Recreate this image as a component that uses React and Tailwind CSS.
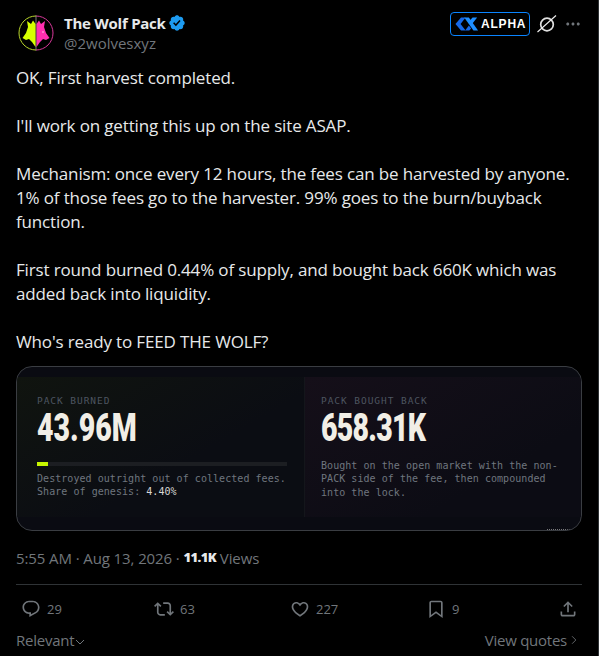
const P = {
  reply: "M1.751 10c0-4.42 3.584-8 8.005-8h4.366c4.49 0 8.129 3.64 8.129 8.13 0 2.96-1.607 5.68-4.196 7.11l-8.054 4.46v-3.69h-.067c-4.49.1-8.183-3.51-8.183-8.01zm8.005-6c-3.317 0-6.005 2.69-6.005 6 0 3.37 2.77 6.08 6.138 6.01l.351-.01h1.761v2.3l5.087-2.81c1.951-1.08 3.163-3.13 3.163-5.36 0-3.39-2.744-6.13-6.129-6.13H9.756z",
  rt: "M4.5 3.88l4.432 4.14-1.364 1.46L5.5 7.55V16c0 1.1.896 2 2 2H13v2H7.5c-2.209 0-4-1.79-4-4V7.55L1.432 9.48.068 8.02 4.5 3.88zM16.5 6H11V4h5.5c2.209 0 4 1.79 4 4v8.45l2.068-1.93 1.364 1.46-4.432 4.14-4.432-4.14 1.364-1.46 2.068 1.93V8c0-1.1-.896-2-2-2z",
  heart: "M16.697 5.5c-1.222-.06-2.679.51-3.89 2.16l-.805 1.09-.806-1.09C9.984 6.01 8.526 5.44 7.304 5.5c-1.243.07-2.349.78-2.91 1.91-.552 1.12-.633 2.78.479 4.82 1.074 1.97 3.257 4.27 7.129 6.61 3.87-2.34 6.052-4.64 7.126-6.61 1.111-2.04 1.03-3.7.477-4.82-.561-1.13-1.666-1.84-2.908-1.91zm4.187 7.69c-1.351 2.48-4.001 5.12-8.379 7.67l-.503.3-.504-.3c-4.379-2.55-7.029-5.19-8.382-7.67-1.36-2.5-1.41-4.86-.514-6.67.887-1.79 2.647-2.91 4.601-3.01 1.651-.09 3.368.56 4.798 2.01 1.429-1.45 3.146-2.1 4.796-2.01 1.954.1 3.714 1.22 4.601 3.01.896 1.81.846 4.17-.514 6.67z",
  book: "M4 4.5C4 3.12 5.119 2 6.5 2h11C18.881 2 20 3.12 20 4.5v18.44l-8-5.71-8 5.71V4.5zM6.5 4c-.276 0-.5.22-.5.5v14.56l6-4.29 6 4.29V4.5c0-.28-.224-.5-.5-.5h-11z",
  share: "M12 2.59l5.7 5.7-1.41 1.42L13 6.41V16h-2V6.41l-3.3 3.3-1.41-1.42L12 2.59zM21 15l-.02 3.51c0 1.38-1.12 2.49-2.5 2.49H5.5C4.11 21 3 19.88 3 18.5V15h2v3.5c0 .28.22.5.5.5h12.98c.28 0 .5-.22.5-.5L19 15h2z",
  verified: "M22.25 12c0-1.43-.88-2.67-2.19-3.34.46-1.39.2-2.9-.81-3.91s-2.52-1.27-3.91-.81c-.66-1.31-1.91-2.19-3.34-2.19s-2.67.88-3.33 2.19c-1.4-.46-2.91-.2-3.92.81s-1.26 2.52-.8 3.91c-1.31.67-2.2 1.91-2.2 3.34s.89 2.67 2.2 3.34c-.46 1.39-.21 2.9.8 3.91s2.52 1.26 3.91.81c.67 1.31 1.91 2.19 3.34 2.19s2.68-.88 3.34-2.19c1.39.45 2.9.2 3.91-.81s1.27-2.52.81-3.91c1.31-.67 2.19-1.91 2.19-3.34zm-11.71 4.2L6.8 12.46l1.41-1.42 2.26 2.26 4.8-5.23 1.47 1.36-6.2 6.77z",
  more: "M3 12c0-1.1.9-2 2-2s2 .9 2 2-.9 2-2 2-2-.9-2-2zm9 2c1.1 0 2-.9 2-2s-.9-2-2-2-2 .9-2 2 .9 2 2 2zm7 0c1.1 0 2-.9 2-2s-.9-2-2-2-2 .9-2 2 .9 2 2 2z",
};

function Icon({ d, className }) {
  return (
    <svg viewBox="0 0 24 24" className={className} fill="currentColor">
      <path d={d} />
    </svg>
  );
}

function Avatar() {
  return (
    <svg viewBox="0 0 36 36" className="w-[36px] h-[36px] shrink-0">
      <path d="M18 1 A17 17 0 0 0 18 35" fill="none" stroke="#b9d62a" strokeWidth="1" />
      <path d="M18 1 A17 17 0 0 1 18 35" fill="none" stroke="#d8389a" strokeWidth="1" />
      <path d="M17.600 0.500h0.800v35h-0.800z" fill="#9a9a90" />
      <path d="M17.500 9 L15 5.500 L13 9 L9 6 L10 12 L8 18 L4.500 23 L8 25 L11 24 L14 27 L17.500 32 Z" fill="#d6ff00" />
      <path d="M18.500 9 L21 5.500 L23 9 L27 6 L26 12 L28 18 L31.500 23 L28 25 L25 24 L22 27 L18.500 32 Z" fill="#ff2fb0" />
      <circle cx="25" cy="17" r="0.800" fill="#ffd0ee" />
    </svg>
  );
}

function AlphaBadge() {
  return (
    <div className="w-[80px] h-[24px] border border-[#0a84ff] rounded-[4px] flex items-center pl-[4px] gap-[2px]">
      <svg viewBox="0 0 26 16" className="w-[24px] h-[16px] shrink-0">
        <path d="M6.500 1h5L6 8l5.500 7h-5L0.500 8z" fill="#1668e8" />
        <path d="M10 1h5l10 14h-5z" fill="#1f8fff" />
        <path d="M19 1h5l-5.500 7-2.500-3.500z" fill="#1f8fff" />
        <path d="M11 15l4-5.500 2.500 3.500-2 2z" fill="#1668e8" />
      </svg>
      <span className="text-white text-[12px] font-bold tracking-[0.8px] leading-none [font-family:'Liberation_Sans',sans-serif]">ALPHA</span>
    </div>
  );
}

function Grok() {
  return (
    <svg viewBox="0 0 20 20" className="w-[20px] h-[20px] shrink-0" fill="none" stroke="#e0e0e0">
      <circle cx="10" cy="10.500" r="6.300" strokeWidth="1.700" />
      <path d="M0.500 18 L19 1.500" strokeWidth="1.100" stroke="#f0f0f0" />
    </svg>
  );
}

function Stat({ label, value, valueClass, children, className }) {
  return (
    <div className={`pt-[18px] ${className}`}>
      <div className="text-[9.500px] leading-[12px] tracking-[0.95px] text-[#4d5560] [font-family:'DejaVu_Sans_Mono',monospace]">{label}</div>
      <div className={`mt-[3px] h-[36px] text-[38px] leading-[36px] font-black text-[#f1eee6] whitespace-nowrap origin-left scale-x-[0.75] [font-family:'Roboto',sans-serif] ${valueClass}`}>{value}</div>
      {children}
    </div>
  );
}

function Action({ d, n, className }) {
  return (
    <div className={`flex items-center gap-[6px] ${className}`}>
      <Icon d={d} className="w-[20px] h-[20px] shrink-0" />
      <span className="text-[13px] leading-[16px]">{n}</span>
    </div>
  );
}

export default function App() {
  return (
    <div className="w-[599px] h-[656px] bg-black overflow-hidden border-r border-[#2f3336] box-border text-[#e7e9ea] [font-family:'Open_Sans',sans-serif]">
      <div className="pl-[16px] pr-[16px] w-[598px]">
        <header className="flex items-start h-[66px] pt-[14px]">
          <div className="ml-[2px] mt-[1px]"><Avatar /></div>
          <div className="ml-[10px] mt-[-1px]">
            <div className="flex items-center gap-[2px]">
              <span className="text-[15px] leading-[20px] font-bold tracking-[-0.25px]">The Wolf Pack</span>
              <Icon d={P.verified} className="w-[18px] h-[18px] text-[#1d9bf0]" />
            </div>
            <div className="text-[15px] leading-[20px] text-[#71767b]">@2wolvesxyz</div>
          </div>
          <div className="ml-auto flex items-center h-[24px] mt-[-2px]">
            <AlphaBadge />
            <div className="ml-[7px]"><Grok /></div>
            <Icon d={P.more} className="ml-[7px] w-[18px] h-[18px] text-[#71767b]" />
          </div>
        </header>

        <div className="text-[17px] leading-[24px] tracking-[-0.15px]">
          <p>OK, First harvest completed.</p>
          <p className="mt-[24px]">I'll work on getting this up on the site ASAP.</p>
          <p className="mt-[24px]">Mechanism: once every 12 hours, the fees can be harvested by anyone.<br />1% of those fees go to the harvester. 99% goes to the burn/buyback<br />function.</p>
          <p className="mt-[24px]">First round burned 0.44% of supply, and bought back 660K which was<br />added back into liquidity.</p>
          <p className="mt-[24px]">Who's ready to FEED THE WOLF?</p>
        </div>

        <div className="relative mt-[12px] w-[566px] h-[165px] rounded-[16px] border border-[#3a3d42] bg-[#0a0b12] overflow-hidden flex flex-col">
          <div className="h-[10px] shrink-0" />
          <div className="h-[140px] shrink-0 flex bg-[repeating-linear-gradient(0deg,transparent_0,transparent_3px,rgba(255,255,255,0.012)_3px,rgba(255,255,255,0.012)_4px)]">
            <Stat label="PACK BURNED" value="43.96M" className="w-[288px] shrink-0 pl-[20px] border-r border-[#14161b] bg-[linear-gradient(150deg,#10140f,#0b0d13_60%)]">
              <div className="mt-[16px] w-[250px] h-[4px] bg-[#1c1e22]">
                <div className="w-[11px] h-[4px] bg-[#c6f500]" />
              </div>
              <div className="mt-[6px] text-[10px] leading-[13.300px] tracking-[0.05px] whitespace-nowrap text-[#6f767f] [font-family:'DejaVu_Sans_Mono',monospace]">
                Destroyed outright out of collected fees.<br />
                Share of genesis: <span className="text-[#d8d8d4]">4.40%</span>
              </div>
            </Stat>
            <Stat label="PACK BOUGHT BACK" value="658.31K" valueClass="tracking-[-1px]" className="flex-1 min-w-0 pl-[16px] bg-[linear-gradient(150deg,#150f19,#0c0c14_70%)]">
              <div className="mt-[13px] text-[10px] leading-[13.300px] tracking-[0.05px] whitespace-nowrap text-[#6f767f] [font-family:'DejaVu_Sans_Mono',monospace]">
                Bought on the open market with the non-<br />
                PACK side of the fee, then compounded<br />
                into the lock.
              </div>
            </Stat>
          </div>
          <div className="absolute right-[11px] bottom-0 w-[23px] border-t border-dotted border-[#77777a]" />
        </div>

        <div className="mt-[17px] h-[20px] flex items-center text-[15px] tracking-[-0.1px] text-[#71767b] whitespace-pre">
          <span>5:55 AM · Aug 13, 2026 · </span>
          <span className="font-extrabold text-[#e7e9ea] text-[13px] tracking-[-0.6px]">11.1K</span>
          <span> Views</span>
        </div>

        <div className="mt-[16px] h-px w-[566px] bg-[#2f3336]" />

        <div className="mt-[14px] flex items-center text-[#71767b] pl-[5px] w-[566px] h-[20px]">
          <Action d={P.reply} n="29" className="w-[133px]" />
          <Action d={P.rt} n="63" className="w-[136px]" />
          <Action d={P.heart} n="227" className="w-[136px]" />
          <Action d={P.book} n="9" className="w-[132px]" />
          <Icon d={P.share} className="w-[20px] h-[20px]" />
        </div>

        <div className="mt-[11px] flex items-center justify-between w-[566px] text-[#71767b] text-[15px] leading-[20px] tracking-[-0.25px]">
          <div className="flex items-center">
            <span>Relevant</span>
            <svg viewBox="0 0 12 12" className="w-[12px] h-[12px] mt-[3px]" fill="none" stroke="currentColor" strokeWidth="1"><path d="M2 4l4 4 4-4" /></svg>
          </div>
          <div className="flex items-center gap-[3px] pr-[2px]">
            <span>View quotes</span>
            <svg viewBox="0 0 12 12" className="w-[10px] h-[12px]" fill="none" stroke="currentColor" strokeWidth="1"><path d="M2.500 1.500l4.500 4.500-4.500 4.500" /></svg>
          </div>
        </div>
      </div>
    </div>
  );
}
